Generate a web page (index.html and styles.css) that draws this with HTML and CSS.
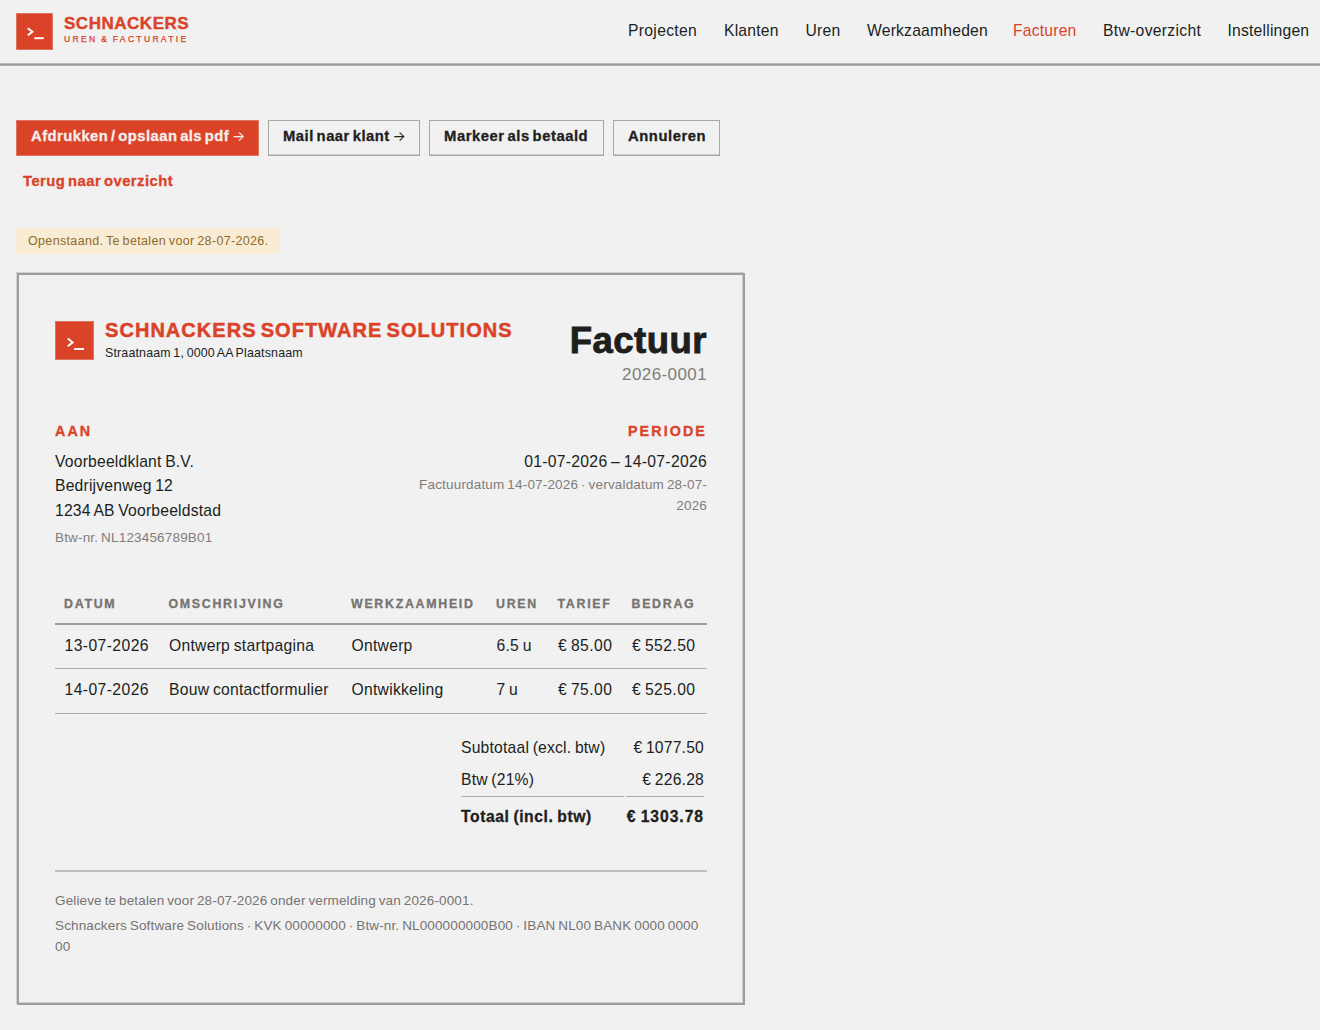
FILE: index.html
```
<!DOCTYPE html>
<html lang="nl">
<head>
    <meta charset="utf-8">
    <title>Factuur 2026-0001</title>
    <link rel="stylesheet" href="styles.css">
</head>
<body>
    <header class="site-header">
        <a class="brand" href="#">
            <svg class="brand-logo" viewBox="0 0 37 37">
                <rect class="logo-bg" x="0.5" y="0.5" width="36" height="36"/>
                <path class="logo-line" d="M11.8 15.2 L16.4 18.7 L11.8 22.2"/>
                <path class="logo-line" d="M18.4 25.2 H27.7"/>
            </svg>
            <span class="brand-text">
                <span class="brand-name">SCHNACKERS</span>
                <span class="brand-sub">UREN &amp; FACTURATIE</span>
            </span>
        </a>
        <nav class="main-nav">
            <a class="wide" href="#">Projecten</a>
            <a href="#">Klanten</a>
            <a href="#">Uren</a>
            <a href="#">Werkzaamheden</a>
            <a class="active" href="#">Facturen</a>
            <a class="wide" href="#">Btw-overzicht</a>
            <a href="#">Instellingen</a>
        </nav>
    </header>

    <main>
        <div class="actions">
            <button class="btn btn-primary">Afdrukken / opslaan als pdf <span class="arrow">→</span></button>
            <button class="btn btn-mail">Mail naar klant <span class="arrow">→</span></button>
            <button class="btn btn-paid">Markeer als betaald</button>
            <button class="btn btn-cancel">Annuleren</button>
        </div>
        <a class="back-link" href="#">Terug naar overzicht</a>

        <p class="status">Openstaand. Te betalen voor 28-07-2026.</p>

        <article class="invoice">
            <div class="invoice-head">
                <div class="sender">
                    <svg class="sender-logo" viewBox="0 0 39 39">
                        <rect class="logo-bg" x="0.5" y="0.5" width="38" height="38"/>
                        <path class="logo-line" d="M12.8 17.6 L17.6 21.4 L12.8 25.2"/>
                        <path class="logo-line" d="M19 28 H29"/>
                    </svg>
                    <div>
                        <div class="sender-name">SCHNACKERS SOFTWARE SOLUTIONS</div>
                        <div class="sender-address">Straatnaam 1, 0000 AA Plaatsnaam</div>
                    </div>
                </div>
                <div class="invoice-title">
                    <h1>Factuur</h1>
                    <div class="invoice-number">2026-0001</div>
                </div>
            </div>

            <div class="parties">
                <div class="customer">
                    <h2>AAN</h2>
                    <p>Voorbeeldklant B.V.<br>Bedrijvenweg 12<br>1234 AB Voorbeeldstad</p>
                    <p class="muted customer-vat">Btw-nr. NL123456789B01</p>
                </div>
                <div class="period">
                    <h2>PERIODE</h2>
                    <p class="period-range">01-07-2026 – 14-07-2026</p>
                    <p class="muted">Factuurdatum 14-07-2026 · vervaldatum 28-07-<br>2026</p>
                </div>
            </div>

            <table class="lines">
                <colgroup>
                    <col class="col-date"><col class="col-desc"><col class="col-work">
                    <col class="col-hours"><col class="col-rate"><col>
                </colgroup>
                <thead>
                    <tr><th>DATUM</th><th>OMSCHRIJVING</th><th>WERKZAAMHEID</th><th>UREN</th><th>TARIEF</th><th>BEDRAG</th></tr>
                </thead>
                <tbody>
                    <tr>
                        <td class="num">13-07-2026</td>
                        <td>Ontwerp startpagina</td>
                        <td>Ontwerp</td>
                        <td>6.5 u</td>
                        <td class="num">€ 85.00</td>
                        <td class="num">€ 552.50</td>
                    </tr>
                    <tr>
                        <td class="num">14-07-2026</td>
                        <td>Bouw contactformulier</td>
                        <td>Ontwikkeling</td>
                        <td>7 u</td>
                        <td class="num">€ 75.00</td>
                        <td class="num">€ 525.00</td>
                    </tr>
                </tbody>
            </table>

            <table class="totals">
                <tr><td>Subtotaal (excl. btw)</td><td class="sum">€ 1077.50</td></tr>
                <tr><td>Btw (21%)</td><td class="sum">€ 226.28</td></tr>
                <tr class="grand"><td>Totaal (incl. btw)</td><td class="sum">€ 1303.78</td></tr>
            </table>

            <footer class="invoice-foot">
                <p>Gelieve te betalen voor 28-07-2026 onder vermelding van 2026-0001.</p>
                <p>Schnackers Software Solutions · KVK 00000000 · Btw-nr. NL000000000B00 · IBAN NL00 BANK 0000 0000 00</p>
            </footer>
        </article>
    </main>
</body>
</html>
```
FILE: styles.css
```
:root {
    --red: #da4328;
    --ink: #201e1d;
    --muted: #7f7d7b;
    --line: #9e9e9e;
    --paper: #f1f1f1;
}

* {
    margin: 0;
    padding: 0;
    box-sizing: border-box;
}

body {
    background: var(--paper);
    color: var(--ink);
    font-family: "Liberation Sans", Arial, sans-serif;
    font-size: 15.7px;
    letter-spacing: 0.2px;
    word-spacing: -1px;
}

a {
    color: inherit;
    text-decoration: none;
}

/* header */
.site-header {
    display: flex;
    justify-content: space-between;
    height: 65px;
    padding: 13px 0 0 16px;
    border-bottom: 1px solid #999;
    box-shadow: 0 1px 0 #b0b0b0, inset 0 -1px 0 #bcbcbc;
}

.brand {
    display: flex;
    height: 37px;
    gap: 11px;
    color: var(--red);
}

.brand-logo {
    width: 37px;
    height: 37px;
}

.logo-bg {
    fill: var(--red);
    stroke: #df7460;
}

.logo-line {
    fill: none;
    stroke: #fff;
    stroke-width: 1.9;
}

.brand-text {
    display: flex;
    flex-direction: column;
    gap: 1px;
    padding-top: 2px;
}

.brand-name {
    font-size: 17px;
    font-weight: bold;
    line-height: 18px;
    letter-spacing: 0.52px;
    -webkit-text-stroke: 0.4px;
}

.brand-sub {
    font-size: 8.6px;
    line-height: 10px;
    letter-spacing: 2.28px;
    -webkit-text-stroke: 0.25px;
}

.main-nav {
    display: grid;
    grid-template-columns: 96px 81.5px 61.5px 146px 90px 124.5px 92.5px;
    padding-top: 5px;
    line-height: 25px;
}

.main-nav .wide {
    letter-spacing: 0.31px;
}

.main-nav .active {
    color: var(--red);
}

main {
    padding: 55px 0 0 16px;
}

/* action bar */
.actions {
    display: flex;
    gap: 9px;
}

.btn {
    height: 36px;
    padding: 5px 0 9px 14px;
    border: 1px solid #a8a8a8;
    box-shadow: inset 0 -1px 0 #cacaca;
    background: none;
    color: var(--ink);
    font: bold 14.8px/20px "Liberation Sans", Arial, sans-serif;
    letter-spacing: 0.55px;
    word-spacing: -1.8px;
    text-align: left;
    white-space: nowrap;
    -webkit-text-stroke: 0.3px;
}

.btn-primary {
    width: 243px;
    border-color: #df7460;
    box-shadow: none;
    background: var(--red);
    color: #f6eeec;
    letter-spacing: 0.45px;
}

.btn-mail {
    width: 152px;
    letter-spacing: 0.5px;
}

.btn-paid {
    width: 175px;
}

.btn-cancel {
    width: 107px;
}

.arrow {
    font-family: Inter, sans-serif;
    font-size: 14px;
    font-weight: normal;
    letter-spacing: 0;
    -webkit-text-stroke: 0;
}

.back-link {
    display: block;
    margin: 15px 0 0 7px;
    color: var(--red);
    font-size: 14.8px;
    font-weight: bold;
    line-height: 20px;
    letter-spacing: 0.46px;
    word-spacing: -1.8px;
    -webkit-text-stroke: 0.3px;
}

.status {
    width: 264px;
    margin: 37px 0 19px;
    padding-left: 12px;
    background: #f8edd4;
    color: #90692a;
    font-size: 12.5px;
    line-height: 26px;
    letter-spacing: 0.34px;
}

/* invoice sheet */
.invoice {
    width: 728px;
    height: 732px;
    margin: 0 0 25px 1px;
    padding: 46px 36px 0;
    border: 2px solid var(--line);
    box-shadow: -1px -1px 0 #d0d0d0, inset -1px -1px 0 #d0d0d0;
}

.invoice-head {
    display: flex;
    justify-content: space-between;
    height: 100px;
}

.sender {
    display: flex;
    gap: 11px;
}

.sender-logo {
    width: 39px;
    height: 39px;
}

.sender-name {
    margin-top: -3px;
    color: var(--red);
    font-size: 20px;
    font-weight: bold;
    line-height: 24px;
    letter-spacing: 1.05px;
    word-spacing: -2.5px;
    -webkit-text-stroke: 0.5px;
}

.sender-address {
    margin-top: 1px;
    font-size: 12.4px;
    line-height: 21px;
    letter-spacing: 0.17px;
}

.invoice-title {
    text-align: right;
}

.invoice-title h1 {
    padding-top: 1px;
    font-size: 36.5px;
    line-height: 38px;
    letter-spacing: 0.5px;
    -webkit-text-stroke: 0.9px;
}

.invoice-number {
    margin-top: 4px;
    color: var(--muted);
    font-size: 17px;
    line-height: 22px;
    letter-spacing: 0.4px;
}

.parties {
    display: flex;
    justify-content: space-between;
    height: 169px;
    line-height: 24.4px;
}

.parties h2 {
    margin-bottom: 9px;
    color: var(--red);
    font-size: 14.3px;
    line-height: 20px;
    letter-spacing: 2.1px;
    -webkit-text-stroke: 0.3px;
}

.muted {
    color: var(--muted);
    font-size: 13.5px;
    line-height: 21px;
    letter-spacing: 0.17px;
}

.customer-vat {
    margin-top: 4px;
}

.period {
    text-align: right;
}

.period-range {
    letter-spacing: 0.3px;
}

/* hour lines */
.lines {
    width: 652px;
    table-layout: fixed;
    border-collapse: collapse;
}

.col-date { width: 104.5px; }
.col-desc { width: 182.5px; }
.col-work { width: 145px; }
.col-hours { width: 61.5px; }
.col-rate { width: 74px; }

.lines th {
    height: 34px;
    padding: 0 0 9px 9px;
    border-bottom: 2px solid var(--line);
    color: #767371;
    font-size: 12.4px;
    line-height: 20px;
    letter-spacing: 1.7px;
    text-align: left;
    vertical-align: bottom;
    -webkit-text-stroke: 0.3px;
}

.lines td {
    height: 44.5px;
    padding: 0 0 2px 9.5px;
    border-bottom: 1px solid #ababab;
    letter-spacing: 0.26px;
    white-space: nowrap;
}

.lines .num {
    letter-spacing: 0.42px;
}

.totals {
    width: 247px;
    margin: 18px 1px 0 auto;
    border-spacing: 2px 0;
}

.totals td {
    width: 163px;
    height: 32px;
    white-space: nowrap;
}

.totals .sum {
    width: 78px;
    text-align: right;
}

.totals .grand td {
    height: 40px;
    padding-top: 1px;
    border-top: 1px solid #ababab;
    font-weight: bold;
    letter-spacing: 0.57px;
    -webkit-text-stroke: 0.3px;
}

.totals .grand .sum {
    letter-spacing: 0.95px;
}

.invoice-foot {
    margin-top: 34px;
    padding-top: 18px;
    border-top: 2px solid #c0c0c0;
    color: #767371;
    font-size: 13.5px;
    line-height: 21px;
    letter-spacing: 0.14px;
}

.invoice-foot p {
    margin-bottom: 4px;
}
```
